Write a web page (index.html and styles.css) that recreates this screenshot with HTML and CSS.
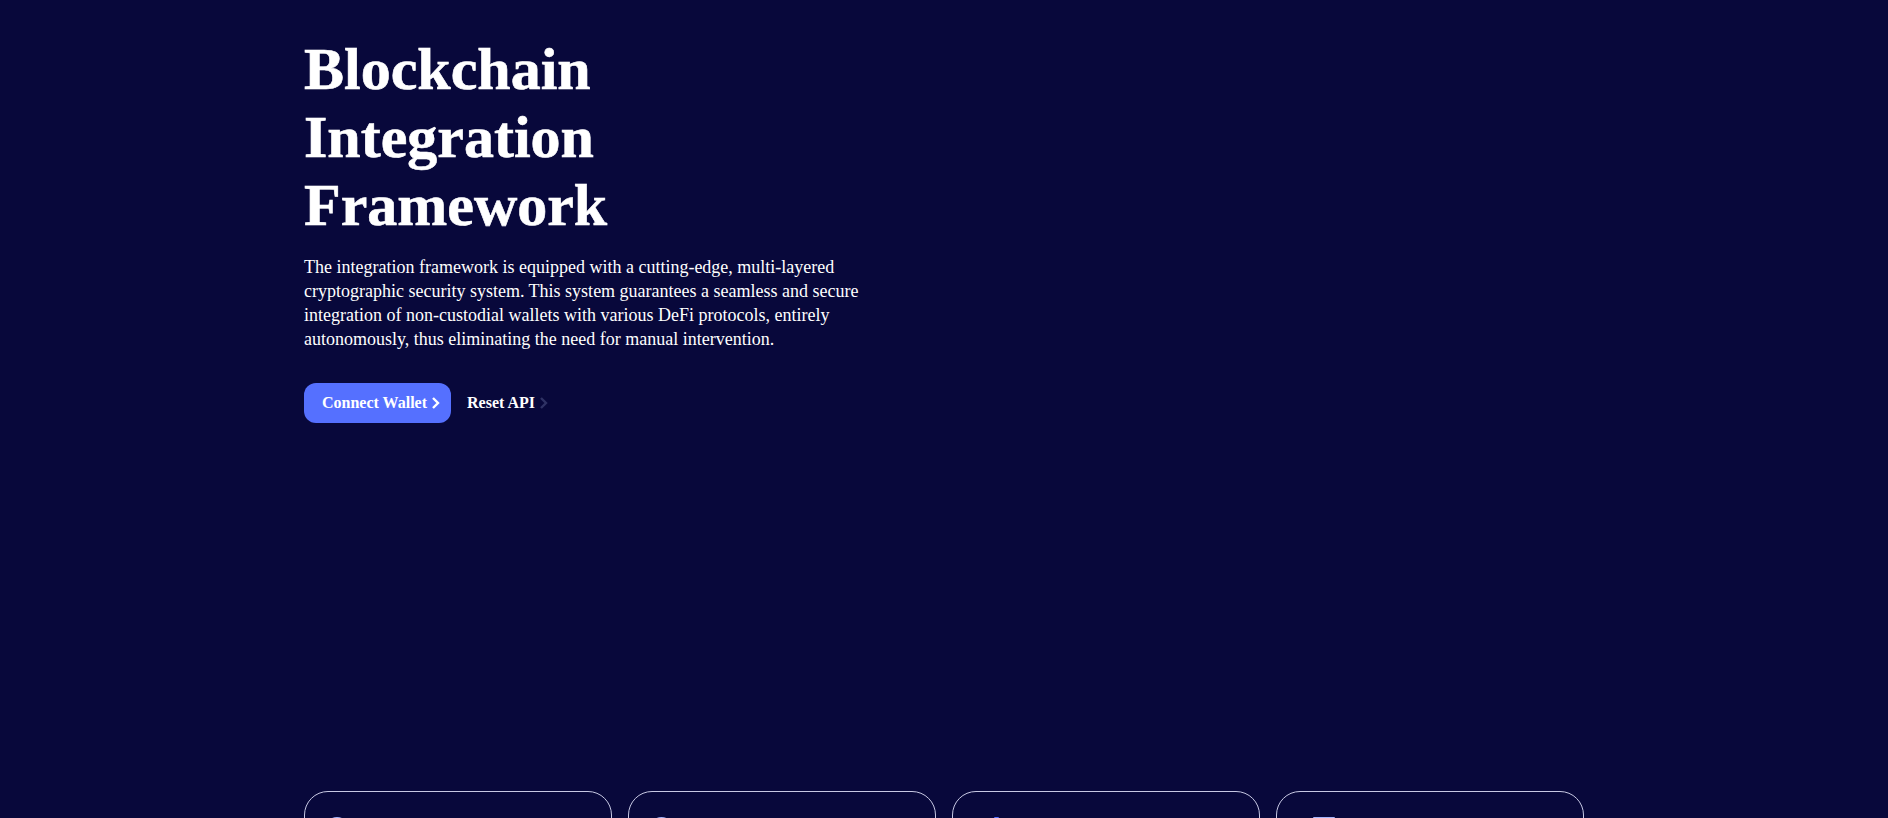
FILE: index.html
```html
<!DOCTYPE html>
<html lang="en">
  <head>
    <meta charset="UTF-8" />
    <meta name="viewport" content="width=device-width, initial-scale=1.0" />
    <title>Blockchain Integration Framework</title>
    <link rel="stylesheet" href="styles.css">
  </head>
  <body>
    <main class="container">
      <!-- Hero -->
      <section class="hero">
        <h1 class="hero-title">Blockchain<br>Integration<br>Framework</h1>
        <p class="hero-text">The integration framework is equipped with a cutting-edge, multi-layered cryptographic security system. This system guarantees a seamless and secure integration of non-custodial wallets with various DeFi protocols, entirely autonomously, thus eliminating the need for manual intervention.</p>
        <div class="hero-actions">
          <a class="btn btn-primary" href="#">Connect Wallet
            <svg class="chevron" width="10" height="14" viewBox="0 0 10 14" fill="none" stroke="currentColor" stroke-width="2.4">
              <path d="M2 2l5 5-5 5" />
            </svg>
          </a>
          <a class="btn btn-link" href="#">Reset API
            <svg class="chevron chevron-dim" width="10" height="14" viewBox="0 0 10 14" fill="none" stroke="currentColor" stroke-width="2.4">
              <path d="M2 2l5 5-5 5" />
            </svg>
          </a>
        </div>
      </section>

      <!-- Feature cards -->
      <section class="cards">
        <div class="card">
          <svg class="card-icon" width="48" height="48" viewBox="0 0 48 48" fill="#a5b4fc"><circle cx="8" cy="13" r="12" /></svg>
        </div>
        <div class="card">
          <svg class="card-icon" width="48" height="48" viewBox="0 0 48 48" fill="#a5b4fc"><circle cx="8.5" cy="13" r="12" /></svg>
        </div>
        <div class="card">
          <svg class="card-icon" width="48" height="48" viewBox="0 0 48 48" fill="#5570ff"><path d="M17.5 1h4l10 24h-24z" /></svg>
        </div>
        <div class="card">
          <svg class="card-icon" width="48" height="48" viewBox="0 0 48 48" fill="#a5b4fc"><rect x="12" y="1" width="22" height="24" rx="1" /></svg>
        </div>
      </section>
    </main>
  </body>
</html>
```

FILE: styles.css
```css
/* Reset and base styles */
* {
  margin: 0;
  padding: 0;
  box-sizing: border-box;
}

html,
body {
  height: 100%;
  overflow: hidden;
}

body {
  background-color: #08083b;
  color: white;
  font-family: "Liberation Serif", "Times New Roman", serif;
}

.container {
  width: 1280px;
  margin: 0 auto;
}

/* Hero */
.hero {
  padding-top: 35px;
  height: 791px;
}

.hero-title {
  font-size: 60px;
  line-height: 68px;
  font-weight: 700;
  -webkit-text-stroke: 0.6px white;
}

.hero-text {
  width: 576px;
  margin-top: 16px;
  font-size: 18px;
  line-height: 24px;
}

.hero-actions {
  display: flex;
  align-items: center;
  gap: 16px;
  margin-top: 32px;
}

/* Buttons */
.btn {
  display: flex;
  align-items: center;
  gap: 4px;
  height: 40px;
  color: white;
  font-size: 16px;
  font-weight: 700;
  text-decoration: none;
}

.btn-primary {
  width: 147px;
  padding-left: 18px;
  background-color: #5570ff;
  border-radius: 12px;
}

.chevron-dim {
  color: #2f3264;
}

/* Cards */
.cards {
  display: grid;
  grid-template-columns: repeat(4, 1fr);
  gap: 16px;
}

.card {
  height: 200px;
  padding: 24px;
  border: 1px solid #c7c8e4;
  border-radius: 24px;
}

.card-icon {
  display: block;
}
```
